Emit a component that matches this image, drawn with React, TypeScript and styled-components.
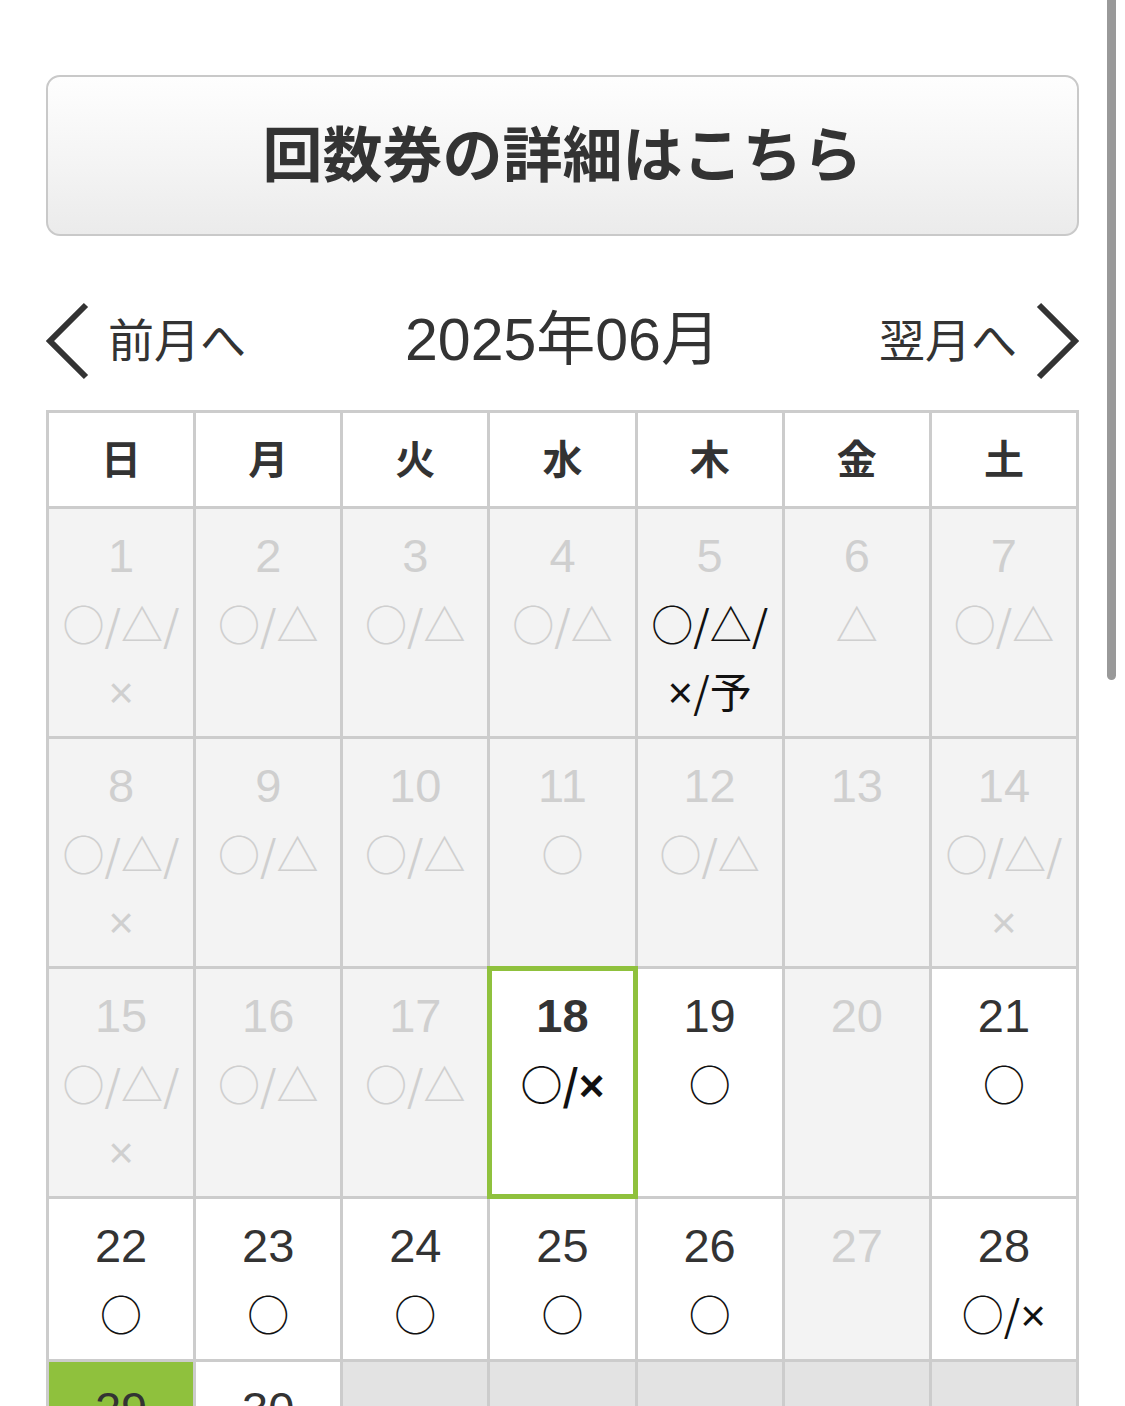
import React from 'react';
import styled, { createGlobalStyle, css } from 'styled-components';

const GREEN = '#8fc13d';
const LINE = '#cccccc';

const WEEKS = ['日', '月', '火', '水', '木', '金', '土'];

type Kind = 'past' | 'open' | 'closed' | 'selected' | 'today' | 'blank';

type Cell = {
  day?: number;
  marks: string[];
  kind: Kind;
  lit?: boolean;
};

const p = (day: number, marks: string[] = [], lit = false): Cell => ({ day, marks, kind: 'past', lit });
const o = (day: number, marks: string[] = []): Cell => ({ day, marks, kind: 'open' });
const c = (day: number): Cell => ({ day, marks: [], kind: 'closed' });
const blank: Cell = { marks: [], kind: 'blank' };

const WEEK_ROWS: Cell[][] = [
  [
    p(1, ['○/△/', '×']),
    p(2, ['○/△']),
    p(3, ['○/△']),
    p(4, ['○/△']),
    p(5, ['○/△/', '×/予'], true),
    p(6, ['△']),
    p(7, ['○/△']),
  ],
  [
    p(8, ['○/△/', '×']),
    p(9, ['○/△']),
    p(10, ['○/△']),
    p(11, ['○']),
    p(12, ['○/△']),
    p(13),
    p(14, ['○/△/', '×']),
  ],
  [
    p(15, ['○/△/', '×']),
    p(16, ['○/△']),
    p(17, ['○/△']),
    { day: 18, marks: ['○/×'], kind: 'selected' },
    o(19, ['○']),
    c(20),
    o(21, ['○']),
  ],
  [o(22, ['○']), o(23, ['○']), o(24, ['○']), o(25, ['○']), o(26, ['○']), c(27), o(28, ['○/×'])],
  [{ day: 29, marks: ['○'], kind: 'today' }, o(30, ['○']), blank, blank, blank, blank, blank],
];

const GlobalStyle = createGlobalStyle`
  html, body {
    margin: 0;
    padding: 0;
    background: #fff;
    overflow: hidden;
  }
  body {
    font-family: "Liberation Sans", "Noto Sans CJK JP", sans-serif;
    color: #333;
  }
`;

const Page = styled.div`
  position: relative;
  height: 1406px;
  padding: 75px 46px 0;
  box-sizing: border-box;
`;

const ScrollThumb = styled.div`
  position: absolute;
  top: 0;
  right: 9px;
  width: 9px;
  height: 680px;
  border-radius: 0 0 5px 5px;
  background: #999;
`;

const TicketButton = styled.button`
  display: flex;
  align-items: center;
  justify-content: center;
  width: 100%;
  height: 161px;
  border: 2px solid #c9c9c9;
  border-radius: 14px;
  background: linear-gradient(to bottom, #fefefe 0%, #f3f3f3 60%, #ebebeb 100%);
  font-family: "Noto Sans CJK JP", sans-serif;
  font-size: 60px;
  font-weight: 700;
  color: #333;
  padding: 0 0 10px;
  cursor: pointer;
`;

const Nav = styled.div`
  display: flex;
  align-items: center;
  justify-content: space-between;
  height: 80px;
  margin: 65px 0 29px;
`;

const NavLink = styled.a`
  display: flex;
  align-items: center;
  gap: 18px;
  width: 250px;
  font-family: "Noto Sans CJK JP", sans-serif;
  font-size: 46px;
  color: #333;
  text-decoration: none;
  &:last-child {
    justify-content: flex-end;
  }
`;

const NavText = styled.span`
  margin-bottom: 8px;
`;

const MonthTitle = styled.h2`
  margin: 0 0 14px;
  font-family: "Liberation Sans", "Noto Sans CJK JP", sans-serif;
  font-size: 59px;
  font-weight: 400;
  color: #333;
`;

const Chevron = ({ dir }: { dir: 'left' | 'right' }) => (
  <svg width="44" height="80" viewBox="0 0 44 80" aria-hidden>
    <polyline
      points={dir === 'left' ? '40,4 4,40 40,76' : '4,4 40,40 4,76'}
      fill="none"
      stroke="#333"
      strokeWidth="6"
    />
  </svg>
);

const Grid = styled.div`
  display: grid;
  grid-template-columns: repeat(7, 1fr);
  gap: 3px;
  padding: 3px;
  background: ${LINE};
`;

const WeekHead = styled.div`
  display: flex;
  align-items: center;
  justify-content: center;
  height: 88px;
  padding-bottom: 5px;
  background: #fff;
  font-family: "Noto Sans CJK JP", sans-serif;
  font-size: 40px;
  font-weight: 700;
  color: #333;
`;

const bgFor: Record<Kind, string> = {
  past: '#f3f3f3',
  closed: '#f3f3f3',
  open: '#fff',
  selected: '#fff',
  today: GREEN,
  blank: '#e3e3e3',
};

const DayCell = styled.div<{ $kind: Kind }>`
  position: relative;
  display: flex;
  flex-direction: column;
  align-items: center;
  padding: 13px 0 13px;
  background: ${({ $kind }) => bgFor[$kind]};
  ${({ $kind }) =>
    $kind === 'selected' &&
    css`
      box-shadow: 0 0 0 3px ${GREEN}, inset 0 0 0 2px ${GREEN};
      z-index: 1;
    `}
`;

const DayNum = styled.span<{ $muted: boolean; $bold: boolean }>`
  display: block;
  height: 67px;
  line-height: 67px;
  font-family: "Liberation Sans", sans-serif;
  font-size: 47px;
  font-weight: ${({ $bold }) => ($bold ? 700 : 400)};
  color: ${({ $muted }) => ($muted ? '#cfcfcf' : '#333')};
`;

const Marks = styled.span<{ $muted: boolean; $bold: boolean }>`
  display: block;
  height: 67px;
  line-height: 67px;
  font-family: "Noto Sans CJK JP", sans-serif;
  font-size: 42px;
  font-weight: ${({ $bold }) => ($bold ? 700 : 400)};
  color: ${({ $muted }) => ($muted ? '#cfcfcf' : '#111')};
  white-space: nowrap;
`;

const Cross = styled.span`
  font-family: "Liberation Sans", sans-serif;
  font-size: 44px;
  line-height: 0;
`;

const renderMarks = (text: string) =>
  text.split('').map((ch, i) => (ch === '×' ? <Cross key={i}>×</Cross> : ch));

const App = () => {
  return (
    <Page>
      <GlobalStyle />
      <TicketButton>回数券の詳細はこちら</TicketButton>
      <Nav>
        <NavLink href="#">
          <Chevron dir="left" />
          <NavText>前月へ</NavText>
        </NavLink>
        <MonthTitle>2025年06月</MonthTitle>
        <NavLink href="#">
          <NavText>翌月へ</NavText>
          <Chevron dir="right" />
        </NavLink>
      </Nav>
      <Grid>
        {WEEKS.map(w => (
          <WeekHead key={w}>{w}</WeekHead>
        ))}
        {WEEK_ROWS.flat().map((cell, idx) => {
          const dim = cell.kind === 'past' || cell.kind === 'closed';
          const bold = cell.kind === 'selected';
          return (
            <DayCell key={idx} $kind={cell.kind}>
              {cell.day !== undefined && (
                <DayNum $muted={dim} $bold={bold}>
                  {cell.day}
                </DayNum>
              )}
              {cell.marks.map((m, i) => (
                <Marks key={i} $muted={dim && !cell.lit} $bold={bold}>
                  {renderMarks(m)}
                </Marks>
              ))}
            </DayCell>
          );
        })}
      </Grid>
      <ScrollThumb />
    </Page>
  );
};

export default App;
